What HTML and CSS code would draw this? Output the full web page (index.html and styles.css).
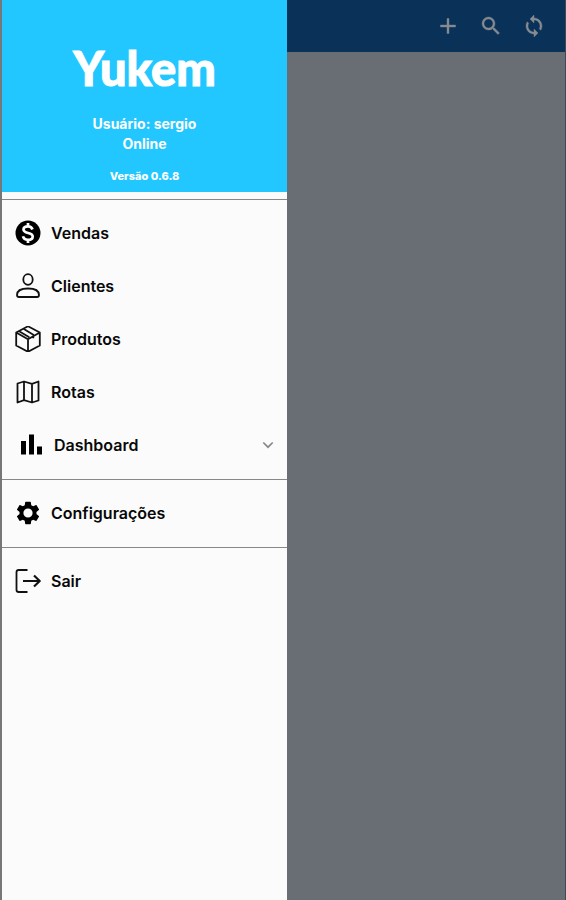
FILE: index.html
```html
<!DOCTYPE html>
<html lang="pt-BR">
<head>
<meta charset="utf-8">
<meta name="viewport" content="width=device-width, initial-scale=1">
<title>Yukem</title>
<link rel="stylesheet" href="styles.css">
</head>
<body>
<div class="app">
  <aside class="drawer">
    <header class="profile">
      <h1 class="brand">Yukem</h1>
      <p class="user">Usuário: sergio</p>
      <p class="user">Online</p>
      <p class="version">Versão 0.6.8</p>
    </header>
    <nav>
      <div class="group">
        <a class="item" href="#vendas">
          <svg class="icon" viewBox="0 0 26 26"><circle cx="13" cy="13" r="12.5"/><path class="coin" d="M17.500 9.500C16.800 7.400 15.300 6.300 13 6.300c-2.600 0-4.500 1.300-4.500 3.300 0 4.600 9.200 2.200 9.200 6.800 0 2.100-1.900 3.400-4.700 3.400-2.600 0-4.500-1.200-5-3.500M13 3v3.500M13 19.500V23"/></svg>
          <span>Vendas</span>
        </a>
        <a class="item" href="#clientes">
          <svg class="icon line" viewBox="0 0 26 26"><ellipse cx="13" cy="6.500" rx="4.700" ry="5.300"/><path d="M2 22c0-4.500 5-6.500 11-6.500S24 17.500 24 22c0 1.200-.8 2-2 2H4c-1.200 0-2-.8-2-2z"/></svg>
          <span>Clientes</span>
        </a>
        <a class="item" href="#produtos">
          <svg class="icon line" viewBox="0 0 26 26"><path d="M13 .3l11.800 6.200v13L13 25.800 1.200 19.500v-13zM1.200 6.500L13 13.200l11.800-6.700M13 13.200v12.600M4.500 5.500l9.800 5.800M8.500 2.800l9.800 5.900v3.500"/></svg>
          <span>Produtos</span>
        </a>
        <a class="item" href="#rotas">
          <svg class="icon line" viewBox="0 0 26 26"><path d="M2.500 4.500L9 2.500l8 2.300 6.500-2.300v19L17 23.500l-8-2.300-6.500 2.300zM9 2.500v18.700M17 4.800v18.700"/></svg>
          <span>Rotas</span>
        </a>
        <button class="item expandable" type="button" aria-expanded="false">
          <svg class="icon" viewBox="0 0 26 26"><path d="M2 9h5v13.500H2zM10 2.500h5v20h-5zM18 14.500h5v8h-5z"/></svg>
          <span>Dashboard</span>
          <svg class="chevron" viewBox="0 0 12 12"><path d="M1.300 3.500L6 8.200l4.700-4.700"/></svg>
        </button>
      </div>
      <div class="group">
        <a class="item" href="#configuracoes">
          <svg class="icon" viewBox="1 1 22 22"><path d="M19.140 12.940c.040-.300.060-.610.060-.940 0-.320-.020-.640-.070-.940l2.030-1.580c.180-.140.230-.410.120-.610l-1.920-3.320c-.120-.220-.370-.290-.590-.220l-2.390.960c-.500-.380-1.030-.700-1.620-.940l-.360-2.540c-.040-.240-.240-.410-.480-.410h-3.840c-.240 0-.430.170-.470.410l-.360 2.540c-.590.240-1.130.570-1.620.940l-2.390-.960c-.220-.080-.470 0-.590.220L2.740 8.870c-.120.210-.080.470.120.610l2.030 1.580c-.050.300-.090.630-.090.940s.020.640.070.940l-2.030 1.580c-.180.140-.230.410-.120.610l1.920 3.320c.120.220.370.290.590.220l2.390-.960c.500.380 1.030.700 1.620.940l.360 2.540c.050.240.240.410.480.410h3.840c.240 0 .440-.170.470-.410l.360-2.540c.590-.240 1.130-.560 1.620-.940l2.390.960c.220.080.470 0 .590-.220l1.920-3.320c.120-.220.070-.470-.120-.610zM12 15.900a3.900 3.900 0 1 1 0-7.800 3.900 3.900 0 0 1 0 7.800z"/></svg>
          <span>Configurações</span>
        </a>
      </div>
      <div class="group">
        <a class="item" href="#sair">
          <svg class="icon line" viewBox="0 0 26 26"><path class="door" d="M12.500 2H3.800C2.500 2 1.500 3 1.500 4.300v17.400C1.500 23 2.500 24 3.800 24h8.700"/><path class="exit" d="M8 13h17M19 7.500l5.700 5.500-5.700 5.500"/></svg>
          <span>Sair</span>
        </a>
      </div>
    </nav>
  </aside>
  <main class="page">
    <div class="toolbar">
      <button class="action" type="button" aria-label="Adicionar"><svg viewBox="0 0 24 24"><path d="M19.500 13h-6.500v6.500h-2V13H4.500v-2H11V4.500h2V11h6.500z"/></svg></button>
      <button class="action" type="button" aria-label="Pesquisar"><svg viewBox="0 0 24 24"><path d="M15.500 14h-.790l-.280-.270A6.470 6.470 0 0 0 16 9.500 6.500 6.500 0 1 0 9.500 16c1.610 0 3.090-.590 4.230-1.570l.270.280v.790l5 4.990L20.490 19zm-6 0a4.500 4.500 0 1 1 0-9 4.500 4.500 0 0 1 0 9z"/></svg></button>
      <button class="action" type="button" aria-label="Sincronizar"><svg viewBox="0 0 24 24"><path d="M12 4V1L8 5l4 4V6c3.310 0 6 2.690 6 6 0 1.010-.250 1.970-.700 2.800l1.460 1.460A7.930 7.930 0 0 0 20 12c0-4.420-3.580-8-8-8zm0 14c-3.310 0-6-2.690-6-6 0-1.010.250-1.970.700-2.800L5.240 7.740A7.930 7.930 0 0 0 4 12c0 4.420 3.580 8 8 8v3l4-4-4-4z"/></svg></button>
    </div>
  </main>
</div>
</body>
</html>
```
FILE: styles.css
```css
* {
  box-sizing: border-box;
}

body {
  margin: 0;
  font-family: Inter, "Liberation Sans", sans-serif;
  color: #080808;
}

h1,
p {
  margin: 0;
}

.app {
  display: flex;
  min-height: 100vh;
  border-left: 2px solid #777;
  border-right: 1px solid #3c4c55;
}

.drawer {
  flex: none;
  width: 285px;
  background: #fbfbfb;
}

.profile {
  padding: 40px 0 8px;
  background: #22c7ff;
  color: #fff;
  text-align: center;
}

.brand {
  margin-bottom: 18px;
  font-family: Lato, sans-serif;
  font-size: 47px;
  font-weight: 900;
  line-height: 56px;
  -webkit-text-stroke: 1px #fff;
}

.user {
  font-size: 14px;
  font-weight: 700;
  line-height: 20px;
}

.version {
  margin-top: 14px;
  font-size: 11px;
  font-weight: 800;
  line-height: 16px;
}

.group {
  padding: 7px 0;
  border-top: 1px solid #888;
}

.profile + nav {
  padding-top: 7px;
}

.item {
  display: flex;
  align-items: center;
  gap: 10px;
  width: 100%;
  height: 53px;
  padding: 0 13px 1px;
  border: 0;
  background: none;
  color: inherit;
  font: 600 16px/20px Inter, "Liberation Sans", sans-serif;
  text-decoration: none;
}

.expandable {
  gap: 9px;
  padding-left: 17px;
}

.icon {
  flex: none;
  width: 26px;
  height: 26px;
}

.line {
  fill: none;
  stroke: #111;
  stroke-width: 1.8;
  stroke-linejoin: round;
}

.coin {
  fill: none;
  stroke: #fff;
  stroke-width: 2.7;
}

.exit {
  stroke-width: 2.2;
}

.chevron {
  width: 12px;
  height: 12px;
  margin-left: auto;
  fill: none;
  stroke: #888;
  stroke-width: 1.7;
}

.page {
  flex: 1;
  background: #696e75;
}

.toolbar {
  display: flex;
  align-items: center;
  justify-content: flex-end;
  gap: 19px;
  height: 52px;
  padding-right: 19px;
  background: #0a3158;
}

.action {
  width: 24px;
  height: 24px;
  padding: 0;
  border: 0;
  background: none;
}

.action svg {
  display: block;
  fill: #858b91;
  stroke: #858b91;
  stroke-width: 0.4;
}
```
